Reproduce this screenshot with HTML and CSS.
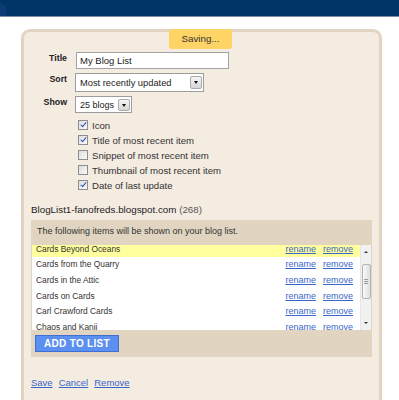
FILE: index.html
```html
<!DOCTYPE html>
<html>
  <head>
    <meta charset="UTF-8">
    <title>Configure Blog List</title>
    <link rel="stylesheet" href="styles.css">
  </head>
  <body>
    <div class="topbar"><span class="blob"></span></div>

    <div class="panel">
      <div class="saving">Saving...</div>

      <div class="form">
        <label class="lbl">Title</label>
        <input class="txt" type="text" value="My Blog List">

        <label class="lbl">Sort</label>
        <div class="sel sel-sort"><span>Most recently updated</span><span class="btn"></span></div>

        <label class="lbl">Show</label>
        <div class="sel sel-show"><span>25 blogs</span><span class="btn"></span></div>
      </div>

      <ul class="checks">
        <li><span class="box on"></span>Icon</li>
        <li><span class="box on"></span>Title of most recent item</li>
        <li><span class="box"></span>Snippet of most recent item</li>
        <li><span class="box"></span>Thumbnail of most recent item</li>
        <li><span class="box on"></span>Date of last update</li>
      </ul>

      <h4 class="listname">BlogList1-fanofreds.blogspot.com <span class="count">(268)</span></h4>

      <div class="listbox">
        <p class="note">The following items will be shown on your blog list.</p>
        <div class="list">
          <div class="rows">
            <div class="rows-inner">
              <div class="row hl"><span class="name">Cards Beyond Oceans</span><a class="l" href="#">rename</a><a class="l" href="#">remove</a></div>
              <div class="row"><span class="name">Cards from the Quarry</span><a class="l" href="#">rename</a><a class="l" href="#">remove</a></div>
              <div class="row"><span class="name">Cards in the Attic</span><a class="l" href="#">rename</a><a class="l" href="#">remove</a></div>
              <div class="row"><span class="name">Cards on Cards</span><a class="l" href="#">rename</a><a class="l" href="#">remove</a></div>
              <div class="row"><span class="name">Carl Crawford Cards</span><a class="l" href="#">rename</a><a class="l" href="#">remove</a></div>
              <div class="row"><span class="name">Chaos and Kanji</span><a class="l" href="#">rename</a><a class="l" href="#">remove</a></div>
            </div>
          </div>
          <div class="scroll">
            <span class="up"></span>
            <span class="thumb"><i></i><i></i><i></i></span>
            <span class="down"></span>
          </div>
        </div>
        <div class="btnrow"><button class="add">ADD TO LIST</button></div>
      </div>

      <div class="actions">
        <a href="#">Save</a>
        <a href="#">Cancel</a>
        <a href="#">Remove</a>
      </div>
    </div>
  </body>
</html>
```

FILE: styles.css
```css
body{
  margin:0;
  background:#fff;
  font-family:"Liberation Sans", Arial, sans-serif;
  color:#333;
  overflow:hidden;
}
.topbar{
  height:16px;
  background:#003366;
  border-bottom:1px solid #7d8ca3;
  position:relative;
  overflow:hidden;
}
.blob{
  position:absolute;
  left:-9px;
  top:3px;
  width:16px;
  height:16px;
  border-radius:50%;
  background:#0b3a74;
}
.panel{
  position:relative;
  margin:12px 0 0 21px;
  width:348px;
  padding:20px 0 40px 7px;
  border:3px solid #e1d5c1;
  border-radius:9px;
  background:#f4ebe1;
}
.saving{
  position:absolute;
  top:-3px;
  left:145px;
  width:63px;
  height:20px;
  line-height:20px;
  text-align:center;
  background:#ffd466;
  border-radius:3px;
  font-size:9.8px;
  color:#333;
}
.form{
  display:grid;
  grid-template-columns:36px auto;
  column-gap:8px;
  row-gap:4px;
  align-items:start;
  justify-items:start;
}
.lbl{
  justify-self:end;
  font-weight:bold;
  font-size:8.8px;
  line-height:12px;
  color:#222;
}
.txt{
  width:153px;
  height:17px;
  box-sizing:border-box;
  margin:0 0 0 1px;
  padding:0 3px;
  border:1px solid #a3a3a3;
  background:#fff;
  font-family:"Liberation Sans", Arial, sans-serif;
  font-size:9.5px;
  color:#222;
  outline:none;
}
.sel{
  display:flex;
  align-items:center;
  box-sizing:border-box;
  border:1px solid #9c9c9c;
  background:#fff;
  padding:0 1px 0 4px;
  font-size:9.3px;
  color:#222;
}
.sel-sort{
  width:129px;
  height:19px;
}
.sel-show{
  width:57px;
  height:17px;
  font-size:9px;
}
.sel .btn{
  margin-left:auto;
  width:12px;
  height:13px;
  box-sizing:border-box;
  border:1px solid #ababab;
  border-radius:2px;
  background:linear-gradient(#f6f6f6,#d6d6d6);
  position:relative;
}
.sel-show .btn{
  height:12px;
}
.sel .btn:after{
  content:"";
  position:absolute;
  left:3px;
  top:4px;
  border-left:2.5px solid transparent;
  border-right:2.5px solid transparent;
  border-top:3px solid #111;
}
.checks{
  list-style:none;
  margin:4.5px 0 0 47px;
  padding:0;
}
.checks li{
  display:flex;
  align-items:center;
  gap:4px;
  height:15px;
  font-size:9.6px;
  color:#333;
}
.box{
  width:10px;
  height:10px;
  box-sizing:border-box;
  border:1px solid #8d8d8d;
  background:linear-gradient(135deg,#dcdcdc,#fafafa);
  position:relative;
}
.box.on:after{
  content:"";
  position:absolute;
  left:2.5px;
  top:0px;
  width:2px;
  height:5px;
  border-right:1.6px solid #2b4fb5;
  border-bottom:1.6px solid #2b4fb5;
  transform:rotate(40deg);
}
.listname{
  margin:10px 0 3px;
  font-weight:normal;
  font-size:9.8px;
  line-height:14px;
  color:#222;
}
.count{
  color:#555;
}
.listbox{
  width:341px;
  box-sizing:border-box;
  padding:0 1px 5px;
  background:#e1d5c1;
}
.note{
  margin:0;
  padding:5px 4px 8px 5px;
  font-size:9px;
  line-height:12px;
  color:#333;
}
.list{
  display:flex;
  height:85px;
  background:#fff;
}
.rows{
  flex:1;
  overflow:hidden;
}
.rows-inner{
  margin-top:-3.5px;
}
.row{
  display:flex;
  align-items:center;
  gap:7px;
  height:15.6px;
  padding:0 7px 0 4px;
  font-size:8.4px;
  color:#333;
}
.row.hl{
  background:#ffff9e;
}
.row .name{
  flex:1;
}
a.l{
  color:#3a66c8;
  font-size:9px;
}
.scroll{
  width:11px;
  box-sizing:border-box;
  border-left:1px solid #e6e6e6;
  background:#f1f1f1;
  display:flex;
  flex-direction:column;
  align-items:center;
}
.up,.down{
  width:10px;
  height:14px;
  position:relative;
}
.up:after,.down:after{
  content:"";
  position:absolute;
  left:3px;
  border-left:2px solid transparent;
  border-right:2px solid transparent;
}
.up:after{
  top:6px;
  border-bottom:2px solid #333;
}
.down{
  margin-top:auto;
}
.down:after{
  top:6px;
  border-top:2px solid #333;
}
.thumb{
  margin-top:5px;
  width:9px;
  height:35px;
  box-sizing:border-box;
  border:1px solid #b3b3b3;
  border-radius:2px;
  background:linear-gradient(90deg,#fafafa,#dedede);
  display:flex;
  flex-direction:column;
  justify-content:center;
  align-items:center;
  gap:1px;
}
.thumb i{
  width:4px;
  height:1px;
  background:#9a9a9a;
}
.btnrow{
  padding:5px 0 0 3px;
}
.add{
  display:block;
  width:84px;
  height:17px;
  padding:0;
  border:1px solid #3e6fd4;
  background:#5b8ff0;
  color:#fff;
  font-family:"Liberation Sans", Arial, sans-serif;
  font-weight:bold;
  font-size:10px;
  letter-spacing:0.3px;
}
.actions{
  display:flex;
  gap:6px;
  margin-top:20px;
  font-size:9.5px;
  line-height:12px;
}
.actions a{
  color:#3a66c8;
}
```
